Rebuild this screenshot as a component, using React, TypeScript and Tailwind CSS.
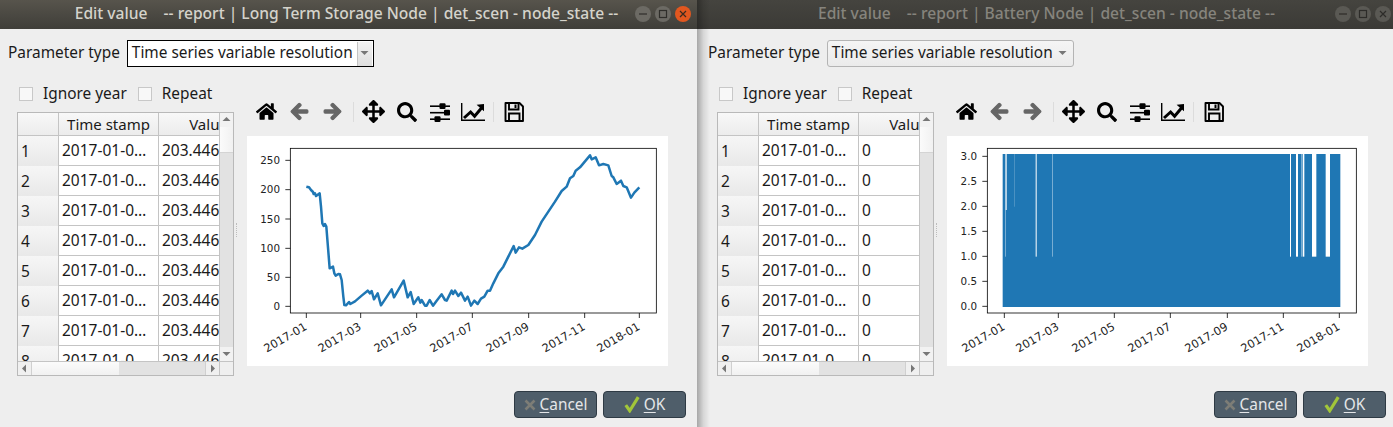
import React from "react";
import { FaHome, FaArrowLeft, FaArrowRight, FaArrowsAlt, FaSearch } from "react-icons/fa";

const linePts =
  "184,170 192,172 198,180 204,186 206,192 210,190 213,198 218,194 224,190 228,230 232,280 236,288 240,282 244,290 248,340 254,415 260,412 264,410 268,430 272,437 280,432 285,433 290,450 295,500 298,525 303,526 312,516 316,522 330,514 350,497 368,482 375,490 380,483 387,508 398,490 408,526 440,478 447,502 476,452 488,502 497,486 506,522 520,502 526,518 530,510 540,527 545,527 554,510 564,527 575,512 590,493 600,510 605,512 620,482 624,492 630,482 640,498 648,488 660,512 668,500 678,527 688,512 698,522 708,506 718,500 728,482 735,482 745,460 760,430 775,410 790,380 806,348 812,368 822,352 832,356 850,345 870,315 890,275 910,245 930,215 950,183 965,170 975,145 985,138 992,122 1005,112 1020,94 1035,76 1040,88 1052,82 1062,106 1075,102 1090,106 1100,138 1105,142 1115,162 1128,152 1135,168 1145,172 1158,203 1168,188 1183,172";

const months = ["2017-01", "2017-03", "2017-05", "2017-07", "2017-09", "2017-11", "2018-01"];

type ChartProps = {
  frameX: number;
  xTicks: number[];
  yTicks: { y: number; label: string }[];
  children: React.ReactNode;
};

function Chart({ frameX, xTicks, yTicks, children }: ChartProps) {
  return (
    <svg viewBox="6 18 1263 690" className="block w-[421px] h-[230px] bg-white">
      {children}
      <rect x={frameX} y={55} width={1234 - frameX} height={494} fill="none" stroke="#000" strokeWidth={2.4} />
      {xTicks.map((x, i) => (
        <g key={i}>
          <line x1={x} x2={x} y1={549} y2={564} stroke="#000" strokeWidth={2.4} />
          <text
            x={x + 4}
            y={597}
            textAnchor="end"
            transform={`rotate(-30 ${x + 4} 597)`}
            fontFamily="'DejaVu Sans', sans-serif"
            fontSize={34}
            fill="#222"
          >
            {months[i]}
          </text>
        </g>
      ))}
      {yTicks.map((t) => (
        <g key={t.label}>
          <line x1={frameX - 15} x2={frameX} y1={t.y} y2={t.y} stroke="#000" strokeWidth={2.4} />
          <text
            x={frameX - 31}
            y={t.y + 11}
            textAnchor="end"
            fontFamily="'DejaVu Sans', sans-serif"
            fontSize={31}
            fill="#222"
          >
            {t.label}
          </text>
        </g>
      ))}
    </svg>
  );
}

function LineChart() {
  return (
    <Chart
      frameX={136}
      xTicks={[184, 347, 515, 682, 851, 1019, 1183]}
      yTicks={[
        { y: 91, label: "250" },
        { y: 179, label: "200" },
        { y: 267, label: "150" },
        { y: 355, label: "100" },
        { y: 442, label: "50" },
        { y: 529, label: "0" },
      ]}
    >
      <polyline points={linePts} fill="none" stroke="#1f77b4" strokeWidth={7.5} strokeLinejoin="round" />
    </Chart>
  );
}

function BatteryChart() {
  const gaps: [number, number, number][] = [
    [180, 2, 380],
    [182, 3, 240],
    [207, 1, 230],
    [272, 3, 380],
    [321, 2, 380],
    [1035, 3, 380],
    [1053, 6, 380],
    [1069, 2, 380],
    [1073, 5, 380],
    [1101, 13, 380],
    [1142, 13, 380],
  ];
  return (
    <Chart
      frameX={127}
      xTicks={[178, 340, 508, 676, 847, 1015, 1183]}
      yTicks={[
        { y: 79, label: "3.0" },
        { y: 154, label: "2.5" },
        { y: 229, label: "2.0" },
        { y: 304, label: "1.5" },
        { y: 379, label: "1.0" },
        { y: 454, label: "0.5" },
        { y: 529, label: "0.0" },
      ]}
    >
      <rect x={173} y={72} width={1013} height={459} fill="#1f77b4" />
      {gaps.map(([x, w, y2]) => (
        <rect key={x} x={x} y={70} width={w} height={y2 - 70} fill="#fff" opacity={w < 3 ? 0.6 : 1} />
      ))}
    </Chart>
  );
}

function SlidersIcon() {
  return (
    <svg viewBox="0 0 20 20" className="w-[20px] h-[20px]" fill="#000">
      <rect x="0" y="3.4" width="20" height="1.6" />
      <rect x="0" y="9.9" width="20" height="1.6" />
      <rect x="0" y="16.4" width="20" height="1.6" />
      <rect x="9.5" y="1.3" width="6" height="5.6" rx="1" />
      <rect x="14" y="7.8" width="6" height="5.6" rx="1" />
      <rect x="4.5" y="14.3" width="6" height="5.6" rx="1" />
    </svg>
  );
}

function TrendIcon() {
  return (
    <svg viewBox="0 0 24 18" className="w-[24px] h-[18px]" fill="none">
      <path d="M0.7 0 V17.2 H24" stroke="#000" strokeWidth="1.4" />
      <path d="M3 15 L9.6 9 L13.6 13.3 L20.5 5" stroke="#000" strokeWidth="3" />
      <path d="M15.6 1.7 L23 1 V8.3 Z" fill="#000" />
    </svg>
  );
}

function SaveIcon() {
  return (
    <svg viewBox="0 0 20 20" className="w-[20px] h-[20px]" fill="none" stroke="#000" strokeWidth="1.9">
      <path d="M1.5 1 H15.5 L19 4.5 V19 H1.5 Z" strokeLinejoin="round" />
      <path d="M5 1 V7.5 H14.5 V1" />
      <path d="M5 19 V11.5 H15.5 V19" />
      <path d="M11.5 2.5 V6" strokeWidth="2" />
    </svg>
  );
}

function ToolButton({ children }: { children: React.ReactNode }) {
  return <div className="w-[33px] h-[33px] flex items-center justify-center">{children}</div>;
}

function Toolbar() {
  return (
    <div className="flex items-center h-[33px] ml-[3px]">
      <ToolButton><FaHome className="w-[21px] h-[21px] text-black" /></ToolButton>
      <ToolButton><FaArrowLeft strokeWidth={36} className="w-[19px] h-[19px] text-[#666666]" /></ToolButton>
      <ToolButton><FaArrowRight strokeWidth={36} className="w-[19px] h-[19px] text-[#666666]" /></ToolButton>
      <div className="w-px h-[20px] bg-[#dcdcdc] ml-[4px] mr-[3px]" />
      <ToolButton><FaArrowsAlt className="w-[23px] h-[23px] text-black" /></ToolButton>
      <ToolButton><FaSearch className="w-[20px] h-[20px] text-black" /></ToolButton>
      <ToolButton><SlidersIcon /></ToolButton>
      <ToolButton><TrendIcon /></ToolButton>
      <div className="w-px h-[20px] bg-[#dcdcdc] ml-[4px] mr-[3px]" />
      <ToolButton><SaveIcon /></ToolButton>
    </div>
  );
}

function Triangle({ dir }: { dir: "up" | "down" | "left" | "right" }) {
  const d = {
    up: "M0.5 5 L4.5 1 L8.5 5 Z",
    down: "M0.5 2 L4.5 6 L8.5 2 Z",
    left: "M2 4.5 L6 0.5 V8.5 Z",
    right: "M3 0.5 L7 4.5 L3 8.5 Z",
  }[dir];
  return (
    <svg viewBox="0 0 9 9" className="w-[9px] h-[9px]" fill="#777777">
      <path d={d} />
    </svg>
  );
}

function DataTable({ value }: { value: string }) {
  const rows = [1, 2, 3, 4, 5, 6, 7, 8];
  return (
    <div className="w-[217px] h-[264px] border border-[#b9b9b9] grid grid-cols-[201px_14px] grid-rows-[248px_14px] bg-white overflow-hidden text-[15.5px]">
      <div className="overflow-hidden">
        <div className="grid grid-cols-[41px_100px_100px] w-[241px] h-[23px] border-b border-[#c4c4c4] bg-gradient-to-b from-[#f8f8f8] to-[#ececec] text-[15px]">
          <div className="border-r border-[#c4c4c4]" />
          <div className="border-r border-[#c4c4c4] text-center leading-[22px]">Time stamp</div>
          <div className="border-r border-[#c4c4c4] text-center leading-[22px]">Value</div>
        </div>
        {rows.map((n) => (
          <div key={n} className="grid grid-cols-[41px_100px_100px] w-[241px] h-[30px] border-b border-[#c4c4c4]">
            <div className="border-r border-[#c4c4c4] bg-gradient-to-b from-[#f6f6f6] to-[#e8e8e8] pl-[3px] leading-[31px]">{n}</div>
            <div className="border-r border-[#c4c4c4] pl-[3px] leading-[28px] whitespace-nowrap overflow-hidden">2017-01-0…</div>
            <div className="pl-[3px] leading-[28px] whitespace-nowrap overflow-hidden">{value}</div>
          </div>
        ))}
      </div>
      <div className="border-l border-[#c4c4c4] flex flex-col bg-[#e2e2e2]">
        <div className="h-[14px] bg-[#f2f2f2] flex items-center justify-center"><Triangle dir="up" /></div>
        <div className="h-[26px] bg-gradient-to-r from-[#fbfbfb] to-[#f1f1f1] border-b border-[#d4d4d4]" />
        <div className="flex-1" />
        <div className="h-[14px] bg-[#f2f2f2] flex items-center justify-center"><Triangle dir="down" /></div>
      </div>
      <div className="border-t border-[#c4c4c4] flex bg-[#e2e2e2]">
        <div className="w-[14px] bg-[#f0f0f0] border-r border-[#d0d0d0] flex items-center justify-center"><Triangle dir="left" /></div>
        <div className="w-[87px] bg-gradient-to-b from-[#fbfbfb] to-[#f1f1f1]" />
        <div className="flex-1" />
        <div className="w-[14px] bg-[#f0f0f0] border-l border-[#d0d0d0] flex items-center justify-center"><Triangle dir="right" /></div>
      </div>
      <div className="border-t border-l border-[#c4c4c4] bg-[#efefef]" />
    </div>
  );
}

function Combo({ focused }: { focused: boolean }) {
  if (focused) {
    return (
      <div className="w-[247px] h-[27px] border border-black bg-white flex items-center justify-between pl-[4px] pr-px">
        <span className="-mt-px">Time series variable resolution</span>
        <span className="w-[15px] h-[24px] bg-gradient-to-b from-[#f3f3f3] to-[#dedede] border-l border-[#c4c4c4] flex items-center justify-center">
          <Triangle dir="down" />
        </span>
      </div>
    );
  }
  return (
    <div className="w-[247px] h-[27px] border border-[#b4b4b4] rounded-[3px] bg-gradient-to-b from-[#f5f5f5] to-[#ebebeb] flex items-center justify-between pl-[4px] pr-[6px]">
      <span className="-mt-px">Time series variable resolution</span>
      <Triangle dir="down" />
    </div>
  );
}

function Check({ label }: { label: string }) {
  return (
    <div className="flex items-center gap-[10px]">
      <div className="w-[14px] h-[14px] bg-[#f8f8f8] border border-[#c8c8c8]" />
      <span>{label}</span>
    </div>
  );
}

function TitleButton({ kind, active }: { kind: "min" | "max" | "close"; active: boolean }) {
  const bg = kind === "close" && active ? "bg-[#e2571f]" : active ? "bg-[#6c6a64]" : "bg-[#5a5954]";
  const stroke = kind === "close" && active ? "#3a2a20" : active ? "#2f2e2a" : "#2d2c29";
  return (
    <div className={`w-[16px] h-[16px] rounded-full ${bg} flex items-center justify-center`}>
      <svg viewBox="0 0 10 10" className="w-[10px] h-[10px]" fill="none" stroke={stroke} strokeWidth="1.2">
        {kind === "min" && <path d="M1 5 H9" />}
        {kind === "max" && <rect x="1.5" y="1.5" width="7" height="7" />}
        {kind === "close" && <path d="M2 2 L8 8 M8 2 L2 8" />}
      </svg>
    </div>
  );
}

function DialogButton({ kind }: { kind: "cancel" | "ok" }) {
  return (
    <div className="w-[83px] h-[27px] rounded-[4px] bg-[#4f5e6a] border border-[#2e3a44] text-[#e4e6e8] flex items-center justify-center gap-[4px]">
      {kind === "cancel" ? (
        <svg viewBox="0 0 12 12" className="w-[12px] h-[12px]" fill="none" stroke="#7d7d76" strokeWidth="2.6">
          <path d="M1.5 1.5 L10.5 10.5 M10.5 1.5 L1.5 10.5" />
        </svg>
      ) : (
        <svg viewBox="0 0 14 15" className="w-[16px] h-[17px]" fill="none" stroke="#a2c63a" strokeWidth="2.8">
          <path d="M1.5 8 L5 13 L12.5 1" />
        </svg>
      )}
      {kind === "cancel" ? (
        <span><span className="underline underline-offset-2">C</span>ancel</span>
      ) : (
        <span><span className="underline underline-offset-2">O</span>K</span>
      )}
    </div>
  );
}

type WindowProps = {
  active: boolean;
  title: string;
  value: string;
  chart: React.ReactNode;
  className: string;
};

function Dialog({ active, title, value, chart, className }: WindowProps) {
  return (
    <div className={`relative h-[427px] flex flex-col overflow-hidden bg-[#eeeeee] ${className}`}>
      <div
        className={`h-[29px] shrink-0 pb-[2px] grid grid-cols-[1fr_auto_1fr] items-center font-medium text-[15.6px] ${
          active
            ? "bg-gradient-to-b from-[#57544c] to-[#3f3e39] text-[#d5d3cb] pr-[4px]"
            : "bg-gradient-to-b from-[#45443f] to-[#3b3a36] text-[#86847d] pl-[3px]"
        }`}
      >
        <div />
        <div className="whitespace-pre">{title}</div>
        <div className={`flex justify-end gap-[4px] ${active ? "pr-[2px]" : "pr-[2px]"}`}>
          <TitleButton kind="min" active={active} />
          <TitleButton kind="max" active={active} />
          <TitleButton kind="close" active={active} />
        </div>
      </div>
      <div className={`flex-1 flex flex-col pt-[11px] pb-[9px] ${active ? "pl-[8px] pr-[11px]" : "pl-[11px] pr-[7px]"}`}>
        <div className="flex items-center gap-[7px] h-[27px]">
          <span className="-mt-px">Parameter type</span>
          <Combo focused={active} />
        </div>
        <div className="flex pl-[9px] mt-[12px]">
          <div className="flex flex-col w-[217px]">
            <div className="flex items-center gap-[11px] pl-[2px] h-[32px] pb-[4px] mt-[1px]">
              <Check label="Ignore year" />
              <Check label="Repeat" />
            </div>
            <DataTable value={value} />
          </div>
          <div className="w-[13px] flex items-center pt-[4px] pl-[2px]">
            <div className="h-[14px] border-l border-dotted border-[#bdbdbd]" />
          </div>
          <div className="flex flex-col">
            <div className="mt-[16px] mb-[8px]"><Toolbar /></div>
            {chart}
          </div>
        </div>
        <div className="flex-1" />
        <div className="flex justify-end gap-[6px]">
          <DialogButton kind="cancel" />
          <DialogButton kind="ok" />
        </div>
      </div>
      {!active && (
        <div className="absolute left-0 top-0 bottom-0 w-[13px] bg-gradient-to-r from-black/30 via-black/10 to-transparent" />
      )}
    </div>
  );
}

export default function App() {
  return (
    <div
      className="w-[1393px] h-[427px] flex overflow-hidden text-[15.4px] text-[#1a1a1a]"
      style={{ fontFamily: "'Noto Sans', sans-serif" }}
    >
      <Dialog
        active
        className="w-[697px] shrink-0"
        title={"Edit value    -- report | Long Term Storage Node | det_scen - node_state --"}
        value="203.446"
        chart={<LineChart />}
      />
      <Dialog
        active={false}
        className="w-[696px] shrink-0"
        title={"Edit value    -- report | Battery Node | det_scen - node_state --"}
        value="0"
        chart={<BatteryChart />}
      />
    </div>
  );
}
